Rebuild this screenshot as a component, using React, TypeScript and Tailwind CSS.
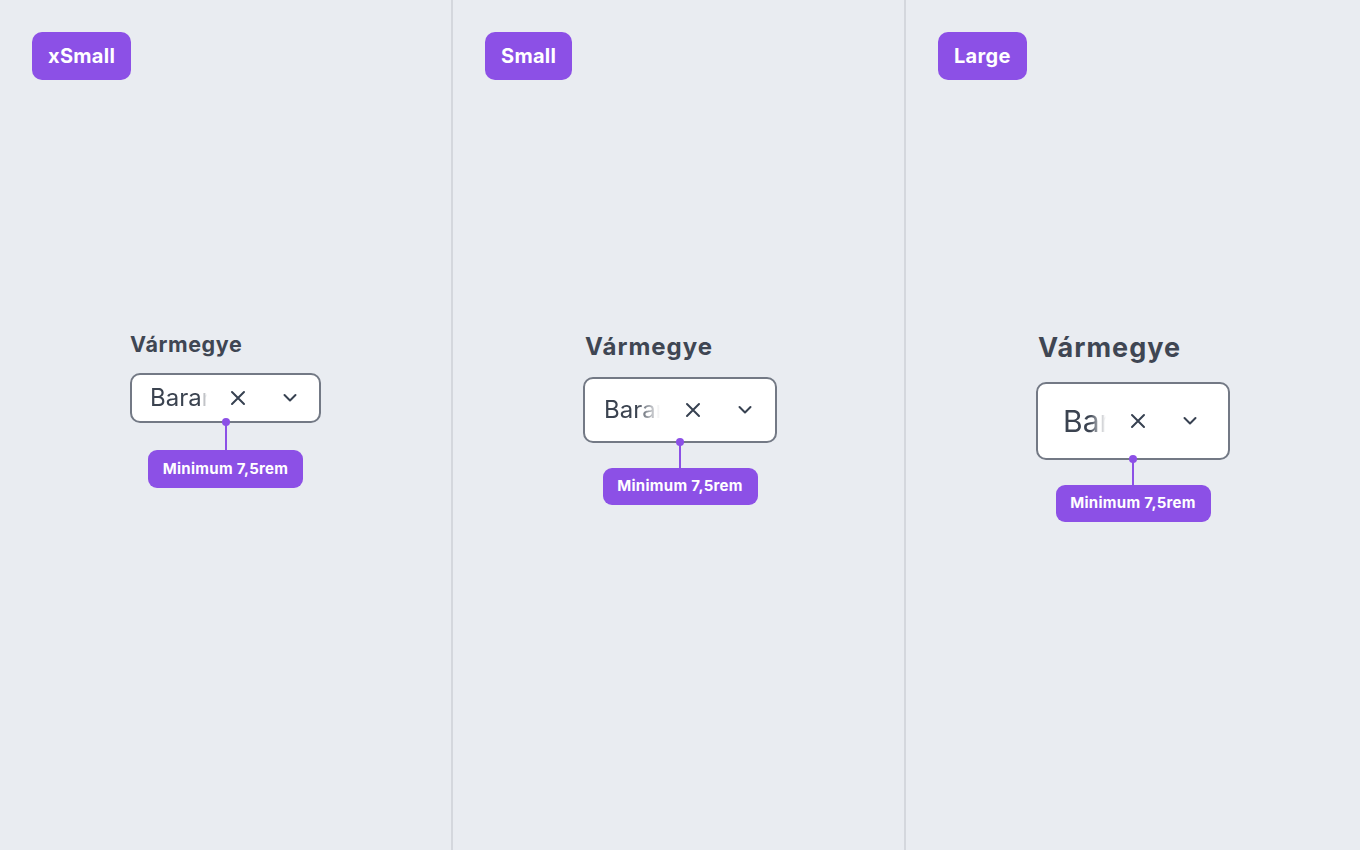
const sizes = [
  {
    name: "xSmall",
    colCls: "w-[453px] border-r-2",
    wrapCls: "w-[191px]",
    labelCls: "text-[21.5px] leading-[24px] tracking-[0.6px] mt-[252px]",
    gap: "mt-[17px]",
    boxCls: "h-[50px] pl-[18px] pr-[21px]",
    textCls: "w-[57px] text-[24px] [mask-image:linear-gradient(to_right,black_86%,transparent)]",
    xGap: "ml-[23px]",
    lineCls: "h-[27px]",
    tipCls: "h-[38px]",
  },
  {
    name: "Small",
    colCls: "w-[453px] border-r-2",
    wrapCls: "w-[194px] ml-[3px]",
    labelCls: "text-[24px] leading-[28px] tracking-[1px] mt-[253px] pl-[2px]",
    gap: "mt-[16px]",
    boxCls: "h-[66px] pl-[19px] pr-[22px]",
    textCls: "w-[56px] text-[24px] [mask-image:linear-gradient(to_right,black_58%,transparent)]",
    xGap: "ml-[25px]",
    lineCls: "h-[25px]",
    tipCls: "h-[37px]",
  },
  {
    name: "Large",
    colCls: "flex-1",
    wrapCls: "w-[194px]",
    labelCls: "text-[27px] leading-[32px] tracking-[1px] mt-[252px] pl-[2px]",
    gap: "mt-[18px]",
    boxCls: "h-[78px] pl-[25px] pr-[30px]",
    textCls: "w-[43px] text-[30px] [mask-image:linear-gradient(to_right,black_62%,transparent)]",
    xGap: "ml-[24px]",
    lineCls: "h-[25px]",
    tipCls: "h-[37px]",
  },
];

function XIcon() {
  return (
    <svg width="16" height="16" viewBox="0 0 16 16" fill="none" className="shrink-0">
      <path d="M2 2L14 14M14 2L2 14" stroke="#374151" strokeWidth="2" strokeLinecap="round" />
    </svg>
  );
}

function Chevron() {
  return (
    <svg width="16" height="10" viewBox="0 0 16 10" fill="none" className="shrink-0">
      <path d="M2.5 2L8 7.5L13.5 2" stroke="#374151" strokeWidth="2" strokeLinecap="round" strokeLinejoin="round" />
    </svg>
  );
}

function Column({ s }: { s: (typeof sizes)[number] }) {
  return (
    <section className={`flex flex-col p-8 border-[#d4d7dd] ${s.colCls}`}>
      <div className="self-start h-12 px-4 flex items-center rounded-[10px] bg-[#8c50e6] text-white text-[20px] tracking-[0.3px] font-bold">
        {s.name}
      </div>
      <div className="flex flex-col items-center">
        <div className={s.wrapCls}>
          <div className={`font-bold text-[#3f4653] ${s.labelCls}`}>Vármegye</div>
          <div className={`relative ${s.gap}`}>
            <div className={`flex items-center bg-white border-2 border-[#737985] rounded-[10px] ${s.boxCls}`}>
              <div className={`shrink-0 overflow-hidden whitespace-nowrap text-[#3b4350] ${s.textCls}`}>Baranya</div>
              <div className={s.xGap}>
                <XIcon />
              </div>
              <div className="ml-[36px]">
                <Chevron />
              </div>
            </div>
            <div className="flex flex-col items-center">
              <div className="relative flex flex-col items-center">
                <span className="absolute -top-[5px] w-2 h-2 rounded-full bg-[#8c50e6]" />
                <div className={`w-[2px] bg-[#8c50e6] ${s.lineCls}`} />
              </div>
              <div
                className={`w-[155px] flex items-center justify-center rounded-[9px] bg-[#8c50e6] text-white text-[15px] tracking-[0.3px] font-bold ${s.tipCls}`}
              >
                Minimum 7,5rem
              </div>
            </div>
          </div>
        </div>
      </div>
    </section>
  );
}

export default function App() {
  return (
    <div className="w-[1360px] h-[850px] flex bg-[#e9ecf1] font-['Inter',sans-serif] overflow-hidden">
      {sizes.map((s) => (
        <Column key={s.name} s={s} />
      ))}
    </div>
  );
}
